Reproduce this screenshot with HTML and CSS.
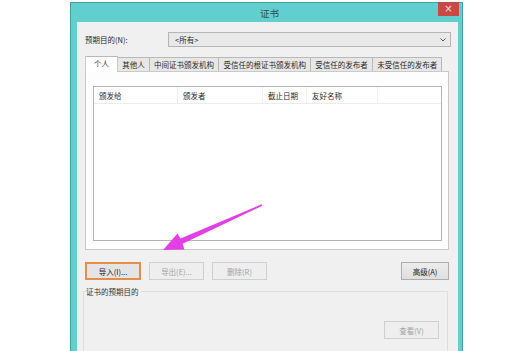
FILE: index.html
```html
<!DOCTYPE html>
<html lang="zh-CN">
<head>
<meta charset="utf-8">
<title>证书</title>
<link rel="stylesheet" href="styles.css">
</head>
<body>
<div class="desk">
  <div class="window">
    <div class="titlebar"><span class="title">证书</span></div>
    <div class="close">×</div>
    <div class="client">
      <div class="purpose-row">
        <span class="purpose-label">预期目的(N):</span>
        <div class="select">
          <span>&lt;所有&gt;</span>
          <svg class="chev" width="6" height="4" viewBox="0 0 6 4"><polyline points="0.5,0.5 3,3 5.5,0.5" fill="none" stroke="#555" stroke-width="1"/></svg>
        </div>
      </div>
      <div class="tabs">
        <div class="tab sel">个人</div>
        <div class="tab">其他人</div>
        <div class="tab">中间证书颁发机构</div>
        <div class="tab">受信任的根证书颁发机构</div>
        <div class="tab">受信任的发布者</div>
        <div class="tab">未受信任的发布者</div>
      </div>
      <div class="panel">
        <div class="list">
          <div class="list-head">
            <div class="col c1">颁发给</div>
            <div class="col c2">颁发者</div>
            <div class="col c3">截止日期</div>
            <div class="col c4">友好名称</div>
            <div class="col c5"></div>
          </div>
        </div>
      </div>
      <div class="btn-row">
        <div class="btn focus">导入(I)...</div>
        <div class="btn disabled">导出(E)...</div>
        <div class="btn disabled">删除(R)</div>
        <div class="btn adv">高级(A)</div>
      </div>
      <fieldset class="group">
        <legend>证书的预期目的</legend>
        <div class="view-row"><div class="btn disabled view">查看(V)</div></div>
      </fieldset>
    </div>
  </div>
  <svg class="arrow" width="529" height="351" viewBox="0 0 529 351">
    <polygon points="261.6,204.3 180.5,238.6 177.5,233.5 163,250 184.5,249.5 182.6,243.8 262.4,205.7" fill="#e23fe6"/>
  </svg>
</div>
</body>
</html>
```
FILE: styles.css
```css
* { box-sizing: border-box; }
html, body { margin: 0; padding: 0; background: #ffffff; }
body {
  font-family: "Noto Sans CJK SC", "Noto Sans", sans-serif;
  font-size: 7.5px;
  color: #2a2a2a;
}
.desk {
  position: relative;
  width: 529px;
  height: 351px;
  overflow: hidden;
  padding: 2px 0 0 70px;
}
.window {
  position: relative;
  width: 393px;
  height: 360px;
  background: #62cfcf;
  border: 1px solid #449fa0;
  border-bottom: none;
  padding: 0 4px 0 6px;
  display: flex;
  flex-direction: column;
}
.titlebar {
  height: 19px;
  display: flex;
  align-items: center;
  justify-content: center;
}
.title {
  font-size: 9.5px;
  color: #2f4f4f;
  margin-left: 4px;
}
.close {
  position: absolute;
  top: -1px;
  right: 3px;
  width: 21px;
  height: 14px;
  background: #c94a45;
  color: #f4dede;
  font-family: "DejaVu Sans", sans-serif;
  font-size: 10px;
  line-height: 13px;
  text-align: center;
}
.client {
  flex: 1;
  background: #f0f0f0;
  padding: 10px 9px 0 8px;
  display: flex;
  flex-direction: column;
}
.purpose-row {
  display: flex;
  align-items: center;
  height: 15px;
  margin-right: -2px;
}
.purpose-label { width: 83px; }
.select {
  flex: 1;
  height: 15px;
  border: 1px solid #b5b5b5;
  background: #e9e9e9;
  display: flex;
  align-items: center;
  justify-content: space-between;
  padding: 0 4px 0 6px;
}
.chev { display: block; }
.tabs {
  display: flex;
  align-items: flex-end;
  margin-top: 8px;
  height: 16px;
  position: relative;
  z-index: 1;
}
.tab {
  height: 14px;
  line-height: 13px;
  padding: 0 4.2px;
  border: 1px solid #b9b9b9;
  border-bottom: none;
  border-left: none;
  background: #e7e7e7;
  white-space: nowrap;
}
.tab.sel {
  height: 16px;
  line-height: 14px;
  padding: 0 8px;
  background: #ffffff;
  border-left: 1px solid #c9c9c9;
  border-right: 1px solid #c9c9c9;
  margin-bottom: -1px;
}
.panel {
  height: 179px;
  background: #fdfdfd;
  border: 1px solid #c9c9c9;
  padding: 14px 6px 0 7px;
}
.list {
  height: 155px;
  background: #ffffff;
  border: 1px solid #b3b3b3;
}
.list-head {
  display: flex;
  height: 17px;
  border-bottom: 1px solid #ececec;
}
.col {
  height: 100%;
  display: flex;
  align-items: center;
  padding-left: 5px;
  border-right: 1px solid #efefef;
}
.c1 { width: 84px; }
.c2 { width: 85px; }
.c3 { width: 44px; }
.c4 { width: 71px; }
.c5 { flex: 1; border-right: none; }
.btn-row {
  display: flex;
  gap: 8px;
  margin-top: 12px;
  height: 18px;
}
.btn {
  height: 18px;
  width: 55px;
  display: flex;
  align-items: center;
  justify-content: center;
  border: 1px solid #adadad;
  background: linear-gradient(#ececec, #dfdfdf);
  color: #222;
}
.btn.focus {
  width: 56px;
  border: 2px solid #e58e4b;
  background: #e4e4e4;
}
.btn.disabled {
  border-color: #cfcfcf;
  background: #eeeeee;
  color: #a3a3a3;
}
.btn.adv {
  width: 48px;
  margin-left: auto;
}
.group {
  margin: 6px 0 0 -2px;
  padding: 0 8px 0 0;
  border: 1px solid #dedede;
  flex: 1;
  min-width: 0;
  width: 365px;
}
.group legend {
  padding: 0 2px 0 0;
  margin-left: 2px;
  color: #333;
}
.view-row {
  display: flex;
  justify-content: flex-end;
  margin-top: 24px;
}
.btn.view { width: 55px; }
.arrow {
  position: absolute;
  left: 0;
  top: 0;
  pointer-events: none;
}
```
